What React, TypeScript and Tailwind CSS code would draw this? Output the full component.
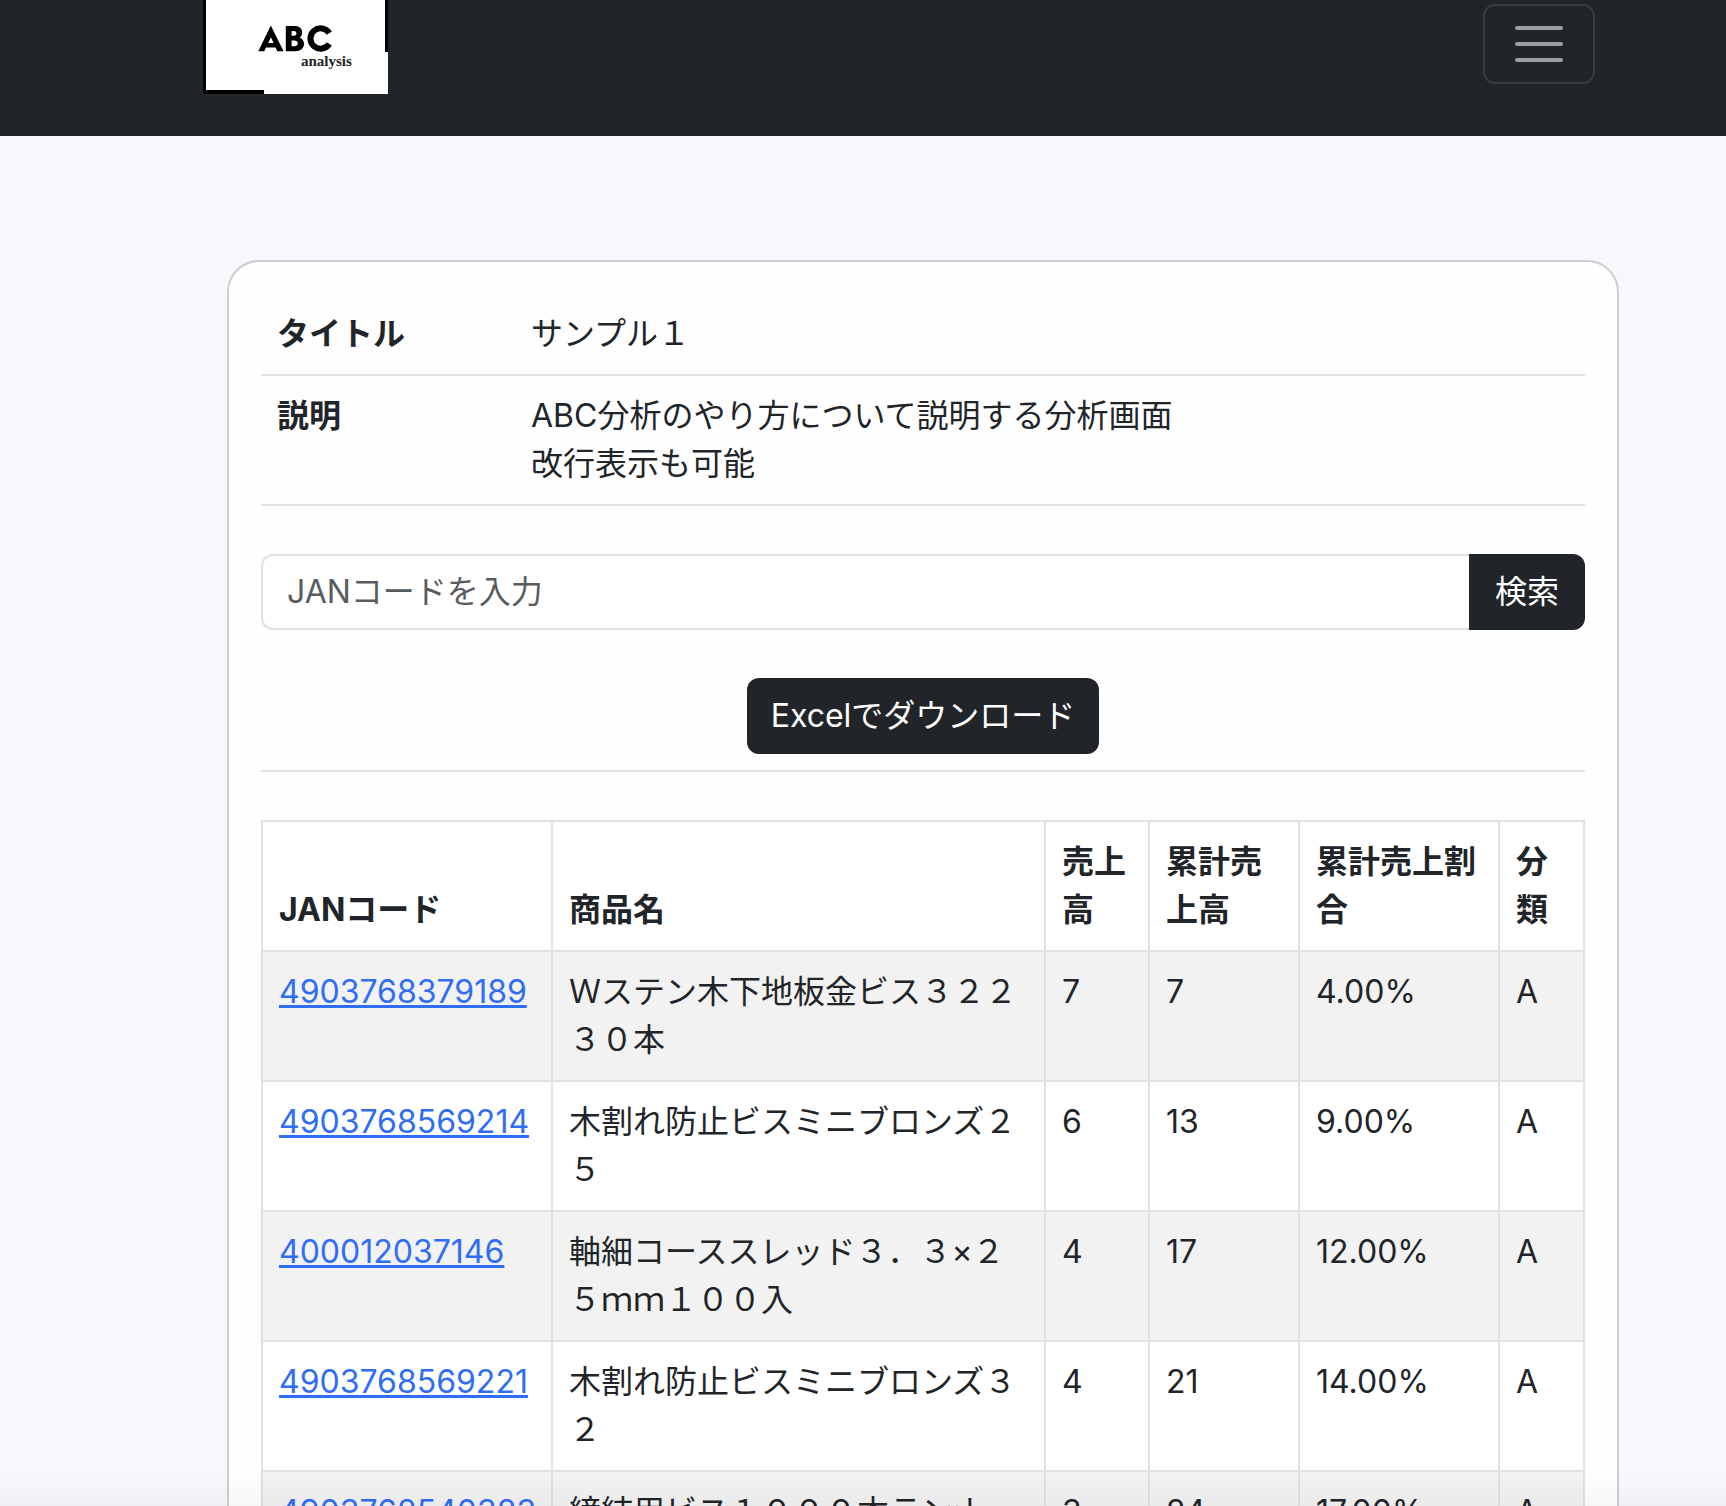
type Item = {
  jan: string;
  name: string;
  sales: number;
  total: number;
  ratio: string;
  rank: string;
};

const items: Item[] = [
  { jan: "4903768379189", name: "Ｗステン木下地板金ビス３２２３０本", sales: 7, total: 7, ratio: "4.00%", rank: "A" },
  { jan: "4903768569214", name: "木割れ防止ビスミニブロンズ２５", sales: 6, total: 13, ratio: "9.00%", rank: "A" },
  { jan: "400012037146", name: "軸細コーススレッド３．３×２５ｍｍ１００入", sales: 4, total: 17, ratio: "12.00%", rank: "A" },
  { jan: "4903768569221", name: "木割れ防止ビスミニブロンズ３２", sales: 4, total: 21, ratio: "14.00%", rank: "A" },
  { jan: "4903768540383", name: "締結用ビス１０００本ランナー", sales: 3, total: 24, ratio: "17.00%", rank: "A" },
];

function Logo() {
  return (
    <a href="#" aria-label="ABC analysis" className="block h-[94px] w-[185px]">
      <svg viewBox="0 0 185 94" className="h-full w-full">
        <rect width="185" height="94" fill="#fff" />
        <rect width="3" height="94" fill="#000" />
        <rect y="90" width="61" height="4" fill="#000" />
        <rect x="182" width="3" height="52" fill="#000" />
        <path
          fill="#000"
          fillRule="evenodd"
          d="M55.3 51.2 L67.8 25.5 L80.6 51.2 H74.3 L72.6 47.6 H63 L61.3 51.2 Z M65.2 43 H70.6 L67.9 37.2 Z"
        />
        <path
          fill="#000"
          fillRule="evenodd"
          d="M82.8 26 H91.5 C96.5 26 99.2 28.6 99.2 32.4 C99.2 34.7 98.2 36.5 96.6 37.5 C99.3 38.5 101 40.8 101 43.8 C101 48.4 97.6 51.2 92.4 51.2 H82.8 Z M88.6 31 V35.8 H91 C94.3 35.8 94.3 31 91 31 Z M88.6 40.6 V46.2 H91.6 C95.9 46.2 95.9 40.6 91.6 40.6 Z"
        />
        <path d="M126.3 33.1 A10.2 10.2 0 1 0 126.3 43.9" fill="none" stroke="#000" strokeWidth="6" />
        <text x="98" y="66" fontFamily="Liberation Serif, serif" fontWeight="700" fontSize="15" fill="#222">
          analysis
        </text>
      </svg>
    </a>
  );
}

function Header() {
  return (
    <header className="flex h-[136px] items-start justify-between bg-[#212529] pr-[131px] pl-[203px]">
      <Logo />
      <button
        type="button"
        aria-label="メニュー"
        className="mt-1 flex h-20 w-28 items-center justify-center rounded-xl border-2 border-white/10"
      >
        <svg viewBox="0 0 48 36" className="h-9 w-12" stroke="#9b9d9f" strokeWidth="4" strokeLinecap="round">
          <path d="M2 2H46M2 18H46M2 34H46" />
        </svg>
      </button>
    </header>
  );
}

const cell = "border-2 border-[#dee2e6] p-4";

export default function App() {
  return (
    <div className="min-h-screen bg-[#f9f7fb] font-['Inter','Noto_Sans_CJK_JP',sans-serif] text-[32px] leading-[48px] text-[#212529]">
      <Header />
      <main className="pt-[124px] pr-[107px] pb-12 pl-[227px]">
        <section className="rounded-[32px] border-2 border-[#cfcfd1] bg-[#fefefe] p-8">
          <table className="w-full table-fixed border-collapse text-left">
            <colgroup>
              <col className="w-[254px]" />
              <col />
            </colgroup>
            <tbody className="align-top">
              <tr className="border-b-2 border-[#dee2e6]">
                <th scope="row" className="p-4 font-bold">タイトル</th>
                <td className="p-4">サンプル１</td>
              </tr>
              <tr className="border-b-2 border-[#dee2e6]">
                <th scope="row" className="p-4 font-bold">説明</th>
                <td className="p-4">
                  ABC分析のやり方について説明する分析画面
                  <br />
                  改行表示も可能
                </td>
              </tr>
            </tbody>
          </table>

          <form className="mt-12 flex h-[76px]" onSubmit={(e) => e.preventDefault()}>
            <input
              type="text"
              aria-label="JANコード"
              placeholder="JANコードを入力"
              className="min-w-0 flex-1 rounded-l-xl border-2 border-r-0 border-[#dee2e6] bg-white px-6 placeholder:text-[#595c5f]"
            />
            <button type="submit" className="rounded-r-xl bg-[#212529] px-[26px] text-white">
              検索
            </button>
          </form>

          <div className="mt-8 flex justify-center border-b-2 border-[#dee2e6] py-4">
            <button type="button" className="h-[76px] rounded-xl bg-[#212529] px-6 text-white">
              Excelでダウンロード
            </button>
          </div>

          <table className="mt-12 w-full table-fixed border-collapse bg-white text-left">
            <colgroup>
              <col className="w-[290px]" />
              <col />
              <col className="w-[104px]" />
              <col className="w-[150px]" />
              <col className="w-[200px]" />
              <col className="w-[85px]" />
            </colgroup>
            <thead className="align-bottom">
              <tr>
                <th scope="col" className={cell}>JANコード</th>
                <th scope="col" className={cell}>商品名</th>
                <th scope="col" className={cell}>売上高</th>
                <th scope="col" className={cell}>累計売上高</th>
                <th scope="col" className={cell}>累計売上割合</th>
                <th scope="col" className={cell}>分類</th>
              </tr>
            </thead>
            <tbody className="align-top">
              {items.map((item) => (
                <tr key={item.jan} className="odd:bg-[#f2f2f2]">
                  <td className={cell}>
                    <a href="#" className="text-[#2f6df6] underline decoration-[3px]">
                      {item.jan}
                    </a>
                  </td>
                  <td className={cell}>{item.name}</td>
                  <td className={cell}>{item.sales}</td>
                  <td className={cell}>{item.total}</td>
                  <td className={cell}>{item.ratio}</td>
                  <td className={cell}>{item.rank}</td>
                </tr>
              ))}
            </tbody>
          </table>
        </section>
      </main>
      <div className="pointer-events-none fixed inset-x-0 bottom-0 h-8 bg-linear-to-b from-transparent to-black/3" />
    </div>
  );
}
